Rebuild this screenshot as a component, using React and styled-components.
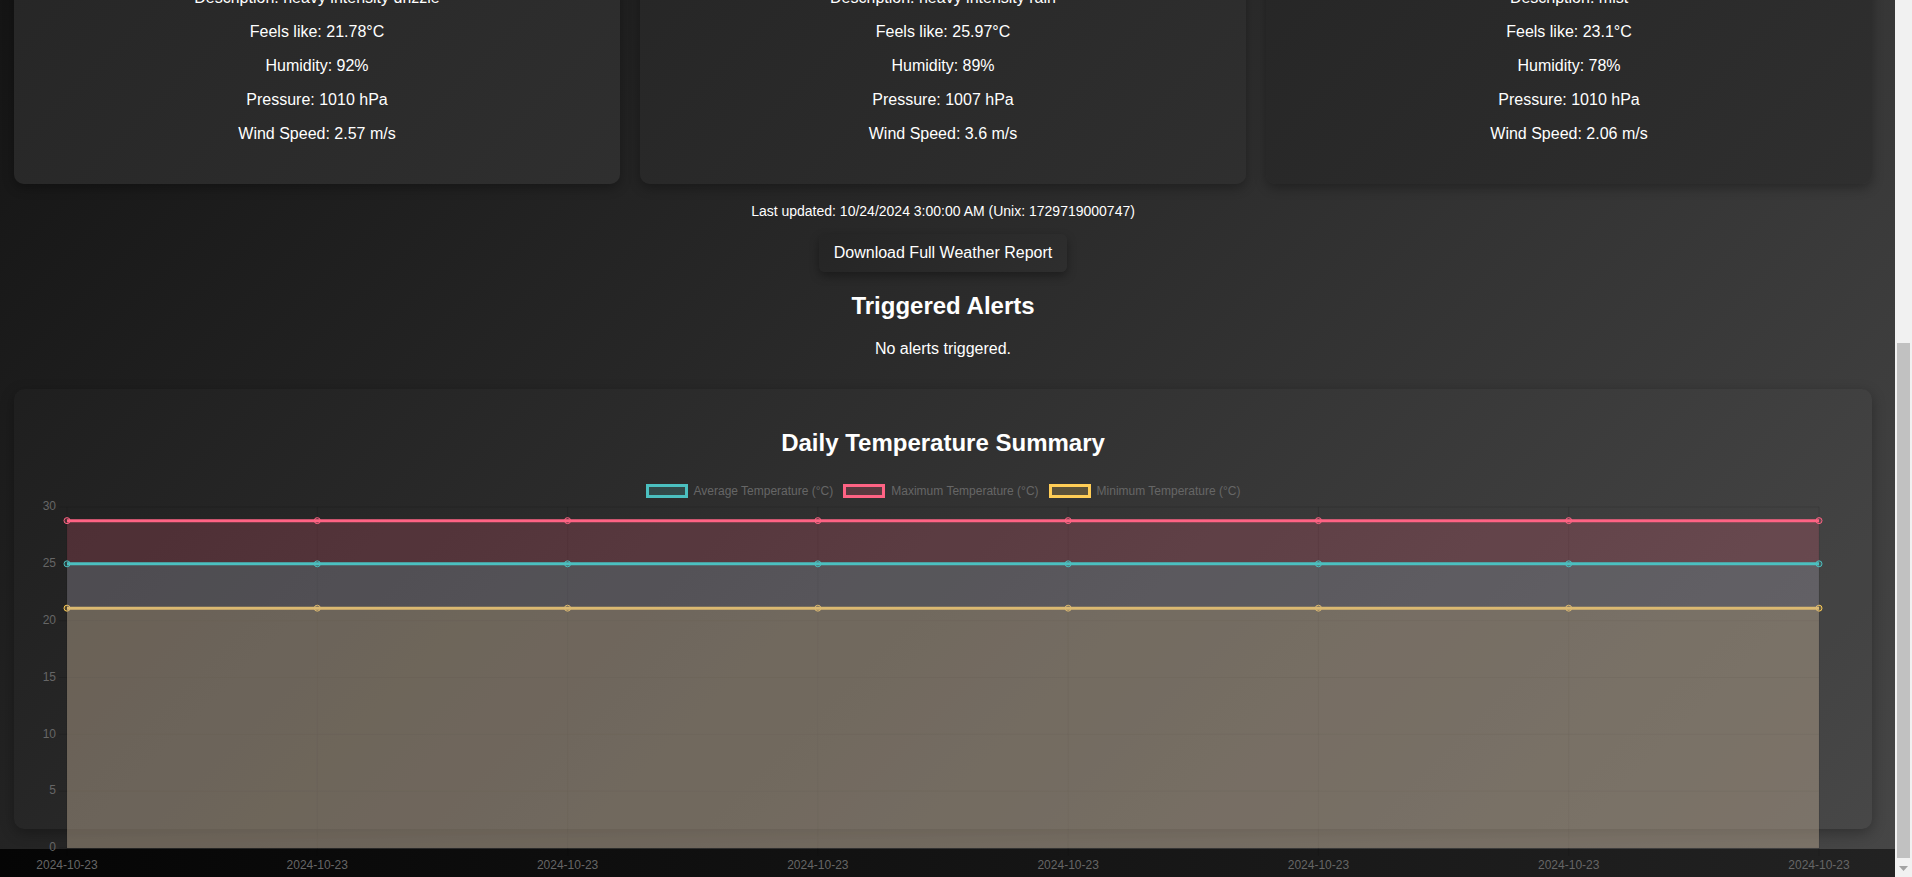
import React from "react";
import styled, { createGlobalStyle } from "styled-components";

const GlobalStyle = createGlobalStyle`
  html, body {
    margin: 0;
    padding: 0;
    height: 100%;
    overflow: hidden;
    background: #050505;
  }
  body {
    font-family: "Liberation Sans", Arial, sans-serif;
    color: #ffffff;
  }
`;

const cities = [
  { name: "Delhi", temp: "22.4", main: "Drizzle", description: "heavy intensity drizzle", feels: "21.78", humidity: 92, pressure: 1010, wind: "2.57" },
  { name: "Mumbai", temp: "25.3", main: "Rain", description: "heavy intensity rain", feels: "25.97", humidity: 89, pressure: 1007, wind: "3.6" },
  { name: "Chennai", temp: "23.05", main: "Mist", description: "mist", feels: "23.1", humidity: 78, pressure: 1010, wind: "2.06" },
];

const datasets = [
  { label: "Average Temperature (°C)", value: 25, color: "#4bc0c0", fill: "rgba(75, 192, 192, 0.2)" },
  { label: "Maximum Temperature (°C)", value: 28.8, color: "#ff6384", fill: "rgba(255, 99, 132, 0.2)" },
  { label: "Minimum Temperature (°C)", value: 21.1, color: "#ffcd56", fill: "rgba(255, 205, 86, 0.2)" },
];

const days = Array.from({ length: 8 }, () => "2024-10-23");

// chart geometry, px inside the svg
const W = 1818;
const H = 374;
const X0 = 33;
const X1 = 1785;
const YTOP = 4;
const Y0 = 345;
const yOf = (v) => Y0 - (v / 30) * (Y0 - YTOP);
const xs = days.map((_, i) => X0 + (i * (X1 - X0)) / 7);
const ticks = [0, 5, 10, 15, 20, 25, 30];

const TempChart = () => {
  return (
    <ChartArea>
      <Legend>
        {datasets.map((d) => (
          <LegendItem key={d.label}>
            <Swatch color={d.color} fill={d.fill} />
            {d.label}
          </LegendItem>
        ))}
      </Legend>
      <Plot viewBox={`0 0 ${W} ${H}`} width={W} height={H}>
        {ticks.map((t) => (
          <line key={"h" + t} x1={X0 - 8} x2={X1} y1={yOf(t)} y2={yOf(t)} stroke="rgba(0,0,0,0.12)" strokeWidth="1" />
        ))}
        {xs.map((x, i) => (
          <line key={"v" + i} x1={x} x2={x} y1={YTOP} y2={Y0 + 8} stroke="rgba(0,0,0,0.12)" strokeWidth="1" />
        ))}
        {[...datasets].reverse().map((d) => (
          <g key={d.label}>
            <rect x={X0} y={yOf(d.value)} width={X1 - X0} height={Y0 - yOf(d.value)} fill={d.fill} />
            <line x1={X0} x2={X1} y1={yOf(d.value)} y2={yOf(d.value)} stroke={d.color} strokeWidth="3" />
            {xs.map((x, i) => (
              <circle key={i} cx={x} cy={yOf(d.value)} r="3" fill={d.fill} stroke={d.color} strokeWidth="1" />
            ))}
          </g>
        ))}
        {ticks.map((t) => (
          <TickText key={"y" + t} x={X0 - 11} y={yOf(t)} textAnchor="end" dominantBaseline="middle">
            {t}
          </TickText>
        ))}
        {xs.map((x, i) => (
          <TickText key={"x" + i} x={x} y={Y0 + 18} textAnchor="middle" dominantBaseline="middle">
            {days[i]}
          </TickText>
        ))}
      </Plot>
    </ChartArea>
  );
};

const App = () => {
  return (
    <>
      <GlobalStyle />
      <Frame>
        <Scroller>
          <Page>
            <Main>
              <Title>Weather Monitoring Dashboard</Title>
              <Settings>
                <SettingsTitle>Alert Settings</SettingsTitle>
                <SettingsRow>
                  <Field>
                    Temperature threshold (°C)
                    <Input defaultValue="35" />
                  </Field>
                  <Field>
                    Consecutive updates
                    <Input defaultValue="2" />
                  </Field>
                  <Field>
                    Unit
                    <Input defaultValue="Celsius" />
                  </Field>
                </SettingsRow>
              </Settings>
              <SectionTitle>Current Weather</SectionTitle>
              <CardGrid>
                {cities.map((c) => (
                  <Card key={c.name}>
                    <CityName>{c.name}</CityName>
                    <Line>Temperature: {c.temp}°C</Line>
                    <Line>Main: {c.main}</Line>
                    <Line>Description: {c.description}</Line>
                    <Line>Feels like: {c.feels}°C</Line>
                    <Line>Humidity: {c.humidity}%</Line>
                    <Line>Pressure: {c.pressure} hPa</Line>
                    <Line>Wind Speed: {c.wind} m/s</Line>
                  </Card>
                ))}
              </CardGrid>
              <Updated>Last updated: 10/24/2024 3:00:00 AM (Unix: 1729719000747)</Updated>
              <DownloadButton>Download Full Weather Report</DownloadButton>
              <AlertsTitle>Triggered Alerts</AlertsTitle>
              <AlertText>No alerts triggered.</AlertText>
              <ChartCard>
                <ChartTitle>Daily Temperature Summary</ChartTitle>
                <TempChart />
              </ChartCard>
            </Main>
          </Page>
        </Scroller>
        <ScrollTrack>
          <ArrowButton />
          <Rail>
            <Thumb />
          </Rail>
          <ArrowButton>
            <svg width="9" height="5" viewBox="0 0 9 5">
              <path d="M0 0 H9 L4.5 5 Z" fill="#a3a3a3" />
            </svg>
          </ArrowButton>
        </ScrollTrack>
      </Frame>
    </>
  );
};

const Frame = styled.div`
  display: flex;
  height: 100vh;
`;

const Scroller = styled.div`
  flex: 1;
  min-width: 0;
  overflow-y: scroll;
  scrollbar-width: none;
  display: flex;
  flex-direction: column-reverse;
  background: #050505;

  &::-webkit-scrollbar {
    display: none;
  }
`;

const ScrollTrack = styled.div`
  width: 17px;
  flex-shrink: 0;
  display: flex;
  flex-direction: column;
  background: #f1f1f1;
`;

const ArrowButton = styled.div`
  height: 17px;
  display: flex;
  align-items: center;
  justify-content: center;
`;

const Rail = styled.div`
  flex: 1;
  display: flex;
  flex-direction: column;
  justify-content: flex-end;
  padding-bottom: 2px;
`;

const Thumb = styled.div`
  height: 515px;
  margin: 0 2px;
  background: #c1c1c1;
`;

const Page = styled.div`
  flex-shrink: 0;
  padding-bottom: 28px;
  background: linear-gradient(to right, #050505, #222222);
`;

const Main = styled.div`
  padding: 20px 23px 20px 14px;
  background: linear-gradient(135deg, #0c0c0c, #464646);
  text-align: center;
`;

const Title = styled.h1`
  margin: 20px 0;
  font-size: 32px;
`;

const Settings = styled.div`
  margin: 0 auto 30px;
  max-width: 900px;
  padding: 20px;
  border-radius: 10px;
  background: linear-gradient(135deg, #1e1e1e, #2a2a2a);
`;

const SettingsTitle = styled.h3`
  margin: 0 0 16px;
  font-size: 18px;
`;

const SettingsRow = styled.div`
  display: flex;
  justify-content: center;
  gap: 24px;
`;

const Field = styled.label`
  display: flex;
  flex-direction: column;
  gap: 6px;
  font-size: 14px;
  color: #dddddd;
`;

const Input = styled.input`
  width: 160px;
  padding: 8px;
  border: 1px solid #444444;
  border-radius: 5px;
  background: #1a1a1a;
  color: #ffffff;
  font: inherit;
`;

const SectionTitle = styled.h2`
  margin: 20px 0;
  font-size: 24px;
`;

const CardGrid = styled.div`
  display: grid;
  grid-template-columns: repeat(3, 1fr);
  gap: 20px;
`;

const Card = styled.div`
  padding: 20px 20px 25px;
  border-radius: 10px;
  background: linear-gradient(135deg, #252525, #2f2f2f);
  box-shadow: 0 4px 12px rgba(0, 0, 0, 0.3);
`;

const CityName = styled.h3`
  margin: 18px 0;
  font-size: 18.72px;
`;

const Line = styled.p`
  margin: 16px 0;
  font-size: 16px;
`;

const Updated = styled.p`
  margin: 19px 0 15px;
  font-size: 14px;
`;

const DownloadButton = styled.button`
  display: block;
  margin: 0 auto;
  padding: 10px 15px;
  border: none;
  border-radius: 6px;
  background: linear-gradient(135deg, #252525, #2e2e2e);
  box-shadow: 0 4px 10px rgba(0, 0, 0, 0.35);
  color: #ffffff;
  font-family: "Liberation Sans", Arial, sans-serif;
  font-size: 16px;
  cursor: pointer;
`;

const AlertsTitle = styled.h2`
  margin: 20px 0;
  font-size: 24px;
`;

const AlertText = styled.p`
  margin: 0 0 31px;
  font-size: 16px;
`;

const ChartCard = styled.div`
  padding: 20px;
  border-radius: 10px;
  background: rgba(255, 255, 255, 0.015);
  box-shadow: 0 4px 14px rgba(0, 0, 0, 0.3);
`;

const ChartTitle = styled.h2`
  margin: 20px 0 22px;
  font-size: 24px;
`;

const ChartArea = styled.div`
  margin-bottom: -68px;
`;

const Legend = styled.div`
  height: 24px;
  display: flex;
  justify-content: center;
  align-items: center;
  gap: 10px;
`;

const LegendItem = styled.div`
  display: flex;
  align-items: center;
  gap: 6px;
  font-size: 12px;
  color: #666666;
`;

const Swatch = styled.span`
  box-sizing: border-box;
  width: 42px;
  height: 14px;
  border: 3px solid ${(props) => props.color};
  background: ${(props) => props.fill};
`;

const Plot = styled.svg`
  display: block;
  width: 100%;
  height: auto;
  overflow: visible;
`;

const TickText = styled.text`
  font-family: "Liberation Sans", Arial, sans-serif;
  font-size: 12px;
  fill: #666666;
`;

export default App;
